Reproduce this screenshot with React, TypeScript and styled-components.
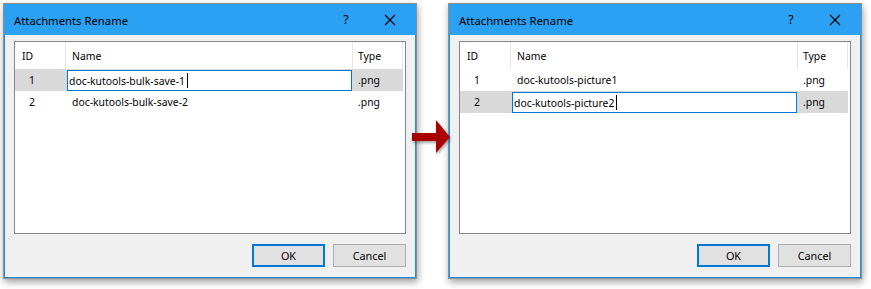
import { createGlobalStyle } from "styled-components";
import styled from "styled-components";

const GlobalStyle = createGlobalStyle`
  html, body {
    margin: 0;
    padding: 0;
    background: #ffffff;
  }
  body {
    font-family: "Noto Sans", "Liberation Sans", sans-serif;
    font-size: 10.4px;
    color: #000;
  }
`;

const Page = styled.div`
  display: flex;
  align-items: flex-start;
  padding: 3px 0 0 3px;
  width: 871px;
  height: 289px;
  box-sizing: border-box;
`;

const Dialog = styled.div`
  width: 414px;
  height: 276px;
  box-sizing: border-box;
  border: 1px solid #8f8f8f;
  background: #f0f0f0;
  display: flex;
  flex-direction: column;
  box-shadow: 1px 3px 7px rgba(0, 0, 0, 0.38);
`;

const TitleBar = styled.div`
  height: 31px;
  flex: none;
  background: #2aa1f2;
  display: flex;
  align-items: center;
  padding-left: 10px;
  box-sizing: border-box;
`;

const Title = styled.span`
  flex: 1;
  font-size: 11.3px;
  color: #000;
  padding-top: 1px;
`;

const TitleButton = styled.div<{ $w: number }>`
  width: ${(p) => p.$w}px;
  height: 31px;
  display: flex;
  align-items: center;
  justify-content: center;
  font-size: 12.5px;
  color: #000;
`;

const Body = styled.div`
  flex: 1;
  border: 1px solid #1c8fe8;
  border-top: none;
  display: flex;
  flex-direction: column;
  padding: 6px 9px 10px 9px;
  gap: 10px;
`;

const ListBox = styled.div`
  height: 193px;
  box-sizing: border-box;
  border: 1px solid #828790;
  background: #ffffff;
`;

const Row = styled.div<{ $selected?: boolean; $header?: boolean }>`
  display: grid;
  grid-template-columns: 51px 287px 50px;
  width: 388px;
  height: ${(p) => (p.$header ? 27 : 22)}px;
  background: ${(p) => (p.$selected ? "#d9d9d9" : "transparent")};
`;

const Cell = styled.div<{ $pad: number; $header?: boolean }>`
  display: flex;
  align-items: center;
  padding-left: ${(p) => p.$pad}px;
  box-sizing: border-box;
  border-right: ${(p) => (p.$header ? "1px solid #e5e5e5" : "none")};
  white-space: nowrap;
  overflow: hidden;
`;

const EditBox = styled.div`
  margin: 1px 1px 0 1px;
  width: 285px;
  height: 21px;
  box-sizing: border-box;
  border: 1px solid #0078d7;
  background: #fff;
  display: flex;
  align-items: center;
  padding-left: 1px;
  white-space: nowrap;
`;

const Caret = styled.span`
  display: inline-block;
  width: 1px;
  height: 15px;
  background: #000;
  margin-left: 2px;
`;

const ButtonRow = styled.div`
  display: flex;
  justify-content: flex-end;
  gap: 8px;
`;

const Button = styled.div<{ $default?: boolean }>`
  width: 73px;
  height: 23px;
  box-sizing: border-box;
  background: #e1e1e1;
  border: ${(p) => (p.$default ? "2px solid #0078d7" : "1px solid #adadad")};
  display: flex;
  align-items: center;
  justify-content: center;
  font-size: 10.8px;
`;

const ArrowSlot = styled.div`
  width: 31px;
  flex: none;
  display: flex;
  position: relative;
  z-index: 2;
`;

const ArrowSvg = styled.svg`
  margin: 114px 0 0 -5px;
  flex: none;
  filter: drop-shadow(1px 2px 1.5px rgba(0, 0, 0, 0.35));
`;

type Item = { id: number; name: string; type: string };

function CloseIcon() {
  return (
    <svg width="12" height="12" viewBox="0 0 12 12">
      <path d="M1 1 L11 11 M11 1 L1 11" stroke="#000" strokeWidth="1.1" fill="none" />
    </svg>
  );
}

function RenameDialog({ items, editing }: { items: Item[]; editing: number }) {
  return (
    <Dialog>
      <TitleBar>
        <Title>Attachments Rename</Title>
        <TitleButton $w={36}>?</TitleButton>
        <TitleButton $w={52}>
          <CloseIcon />
        </TitleButton>
      </TitleBar>
      <Body>
        <ListBox>
          <Row $header>
            <Cell $pad={7} $header>ID</Cell>
            <Cell $pad={6} $header>Name</Cell>
            <Cell $pad={5} $header>Type</Cell>
          </Row>
          {items.map((item) => (
            <Row key={item.id} $selected={item.id === editing}>
              <Cell $pad={14}>{item.id}</Cell>
              {item.id === editing ? (
                <Cell $pad={0}>
                  <EditBox>
                    {item.name}
                    <Caret />
                  </EditBox>
                </Cell>
              ) : (
                <Cell $pad={6}>{item.name}</Cell>
              )}
              <Cell $pad={5}>{item.type}</Cell>
            </Row>
          ))}
        </ListBox>
        <ButtonRow>
          <Button $default>OK</Button>
          <Button>Cancel</Button>
        </ButtonRow>
      </Body>
    </Dialog>
  );
}

export default function App() {
  const before: Item[] = [
    { id: 1, name: "doc-kutools-bulk-save-1", type: ".png" },
    { id: 2, name: "doc-kutools-bulk-save-2", type: ".png" },
  ];
  const after: Item[] = [
    { id: 1, name: "doc-kutools-picture1", type: ".png" },
    { id: 2, name: "doc-kutools-picture2", type: ".png" },
  ];
  return (
    <>
      <GlobalStyle />
      <Page>
        <RenameDialog items={before} editing={1} />
        <ArrowSlot>
          <ArrowSvg width="40" height="36" viewBox="0 0 40 36">
            <polygon points="0,16 24,16 24,3 38,20 24,36 24,24 0,24" fill="#a80000" />
          </ArrowSvg>
        </ArrowSlot>
        <RenameDialog items={after} editing={2} />
      </Page>
    </>
  );
}
